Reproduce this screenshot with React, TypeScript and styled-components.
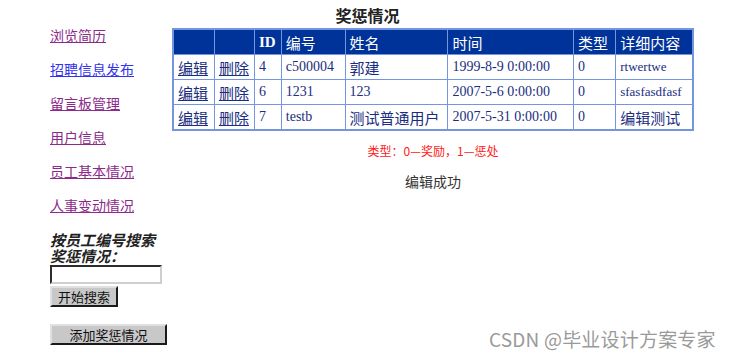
import { createGlobalStyle, styled } from "styled-components";

const GlobalStyle = createGlobalStyle`
  body {
    margin: 0;
    background: #ffffff;
    font-family: "Liberation Serif", "Noto Sans CJK SC", serif;
  }
`;

const Page = styled.div`
  position: relative;
  width: 735px;
  height: 359px;
  overflow: hidden;
`;

const Title = styled.h1`
  margin: 0;
  padding-top: 5px;
  height: 23px;
  text-align: center;
  font-size: 16px;
  font-weight: bold;
  color: #222;
  font-family: "Noto Sans CJK SC", sans-serif;
  line-height: 20px;
`;

const Body = styled.div`
  display: flex;
`;

const Sidebar = styled.div`
  width: 122px;
  padding-left: 50px;
  display: flex;
  flex-direction: column;
`;

const NavLink = styled.a<{ $active?: boolean }>`
  display: block;
  height: 34px;
  line-height: 15px;
  font-size: 14px;
  font-family: "Noto Sans CJK SC", sans-serif;
  color: ${(p) => (p.$active ? "#3333ee" : "#8b2a8b")};
  text-decoration: underline;
  cursor: pointer;
`;

const SearchLabel = styled.div`
  margin-top: 0;
  font-size: 15px;
  font-weight: bold;
  font-style: italic;
  line-height: 16px;
  color: #222;
  font-family: "Noto Sans CJK SC", sans-serif;
`;

const SearchInput = styled.input`
  box-sizing: border-box;
  width: 112px;
  height: 19px;
  margin: 1px 0 0;
  border: 2px inset #cfcfcf;
  border-top-color: #808080;
  border-left-color: #808080;
  padding: 0 2px;
`;

const GrayButton = styled.button<{ $w: number }>`
  box-sizing: border-box;
  width: ${(p) => p.$w}px;
  height: 21px;
  padding: 0;
  background: #c8c8c8;
  border: 2px outset #e0e0e0;
  border-right-color: #707070;
  border-bottom-color: #707070;
  font-size: 13px;
  font-family: "Noto Sans CJK SC", sans-serif;
  color: #111;
  line-height: 14px;
`;

const Main = styled.div`
  width: 522px;
  display: flex;
  flex-direction: column;
  align-items: center;
`;

const Table = styled.table`
  width: 522px;
  border-collapse: collapse;
  border: 2px solid #7495e0;
  font-size: 14px;
`;

const HeadCell = styled.th<{ $w: number }>`
  width: ${(p) => p.$w}px;
  height: 24px;
  padding: 0 4px;
  background: #003399;
  color: #ffffff;
  text-align: left;
  font-weight: normal;
  font-size: 15px;
  border: 1px solid #7495e0;
  font-family: "Noto Sans CJK SC", sans-serif;
`;

const IdHead = styled(HeadCell)`
  font-family: "Liberation Serif", serif;
  font-weight: bold;
`;

const Cell = styled.td`
  height: 24px;
  padding: 0 4px;
  border: 1px solid #7495e0;
  color: #1a2d80;
  font-family: "Liberation Serif", "Noto Sans CJK SC", serif;
  font-size: 14px;
  white-space: nowrap;
`;

const CnCell = styled(Cell)`
  font-family: "Noto Sans CJK SC", sans-serif;
  font-size: 15px;
`;

const SmallCell = styled(Cell)`
  font-size: 13px;
`;

const TableLink = styled.a`
  color: #1a2d80;
  text-decoration: underline;
  font-family: "Noto Sans CJK SC", sans-serif;
  font-size: 15px;
`;

const Note = styled.div`
  margin-top: 11px;
  font-size: 12px;
  color: #ff2020;
  font-family: "Noto Sans CJK SC", sans-serif;
`;

const Status = styled.div`
  margin-top: 12px;
  font-size: 14px;
  color: #333;
  font-family: "Noto Sans CJK SC", sans-serif;
`;

const Watermark = styled.div`
  position: absolute;
  left: 489px;
  top: 325px;
  font-size: 19px;
  color: #9a9a9a;
  font-family: "Noto Sans CJK SC", sans-serif;
  letter-spacing: 0.2px;
`;

const links = ["浏览简历", "招聘信息发布", "留言板管理", "用户信息", "员工基本情况", "人事变动情况"];

const rows = [
  { id: "4", no: "c500004", name: "郭建", time: "1999-8-9 0:00:00", type: "0", detail: "rtwertwe" },
  { id: "6", no: "1231", name: "123", time: "2007-5-6 0:00:00", type: "0", detail: "sfasfasdfasf" },
  { id: "7", no: "testb", name: "测试普通用户", time: "2007-5-31 0:00:00", type: "0", detail: "编辑测试" },
];

const isCn = (s: string) => /[\u4e00-\u9fff]/.test(s);

export default function App() {
  return (
    <Page>
      <GlobalStyle />
      <Title>奖惩情况</Title>
      <Body>
        <Sidebar>
          {links.map((l, i) => (
            <NavLink key={l} $active={i === 1}>
              {l}
            </NavLink>
          ))}
          <SearchLabel>
            按员工编号搜索
            <br />
            奖惩情况：
          </SearchLabel>
          <SearchInput type="text" />
          <GrayButton $w={68} style={{ marginTop: 2 }}>
            开始搜索
          </GrayButton>
          <GrayButton $w={117} style={{ marginTop: 17 }}>
            添加奖惩情况
          </GrayButton>
        </Sidebar>
        <Main>
          <Table>
            <thead>
              <tr>
                <HeadCell $w={32} />
                <HeadCell $w={31} />
                <IdHead $w={18}>ID</IdHead>
                <HeadCell $w={55}>编号</HeadCell>
                <HeadCell $w={94}>姓名</HeadCell>
                <HeadCell $w={117}>时间</HeadCell>
                <HeadCell $w={34}>类型</HeadCell>
                <HeadCell $w={68}>详细内容</HeadCell>
              </tr>
            </thead>
            <tbody>
              {rows.map((r) => (
                <tr key={r.id}>
                  <Cell>
                    <TableLink>编辑</TableLink>
                  </Cell>
                  <Cell>
                    <TableLink>删除</TableLink>
                  </Cell>
                  <Cell>{r.id}</Cell>
                  <Cell>{r.no}</Cell>
                  {isCn(r.name) ? <CnCell>{r.name}</CnCell> : <Cell>{r.name}</Cell>}
                  <Cell>{r.time}</Cell>
                  <Cell>{r.type}</Cell>
                  {isCn(r.detail) ? <CnCell>{r.detail}</CnCell> : <SmallCell>{r.detail}</SmallCell>}
                </tr>
              ))}
            </tbody>
          </Table>
          <Note>类型：0—奖励，1—惩处</Note>
          <Status>编辑成功</Status>
        </Main>
      </Body>
      <Watermark>CSDN @毕业设计方案专家</Watermark>
    </Page>
  );
}
